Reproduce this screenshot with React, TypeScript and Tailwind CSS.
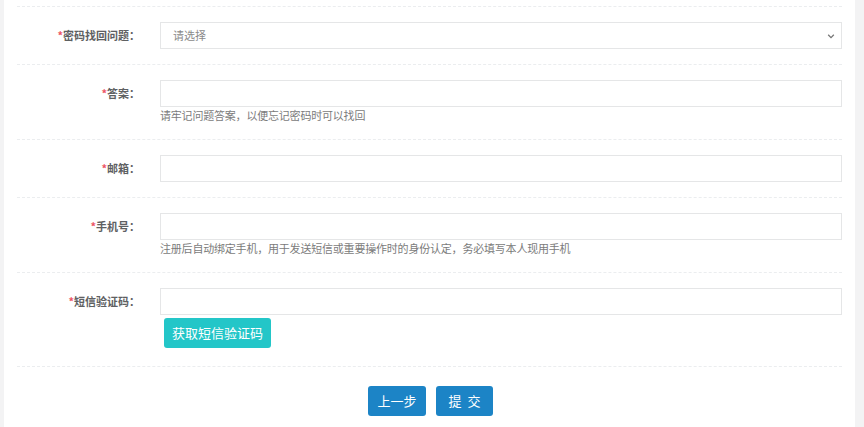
import React from "react";

const font = { fontFamily: '"Noto Sans CJK SC", "Noto Sans", sans-serif' };

function Label({ text }: { text: string }) {
  return (
    <div className="w-[125px] shrink-0 text-right text-[11px] font-bold text-[#5e6062] h-[27px] flex items-center justify-end pr-[2px]">
      <span className="text-[#ed5565]">*</span>
      <span>{text}：</span>
    </div>
  );
}

function Row({
  label,
  help,
  children,
  pb = "pb-[15px]",
}: {
  label: string;
  help?: string;
  children?: React.ReactNode;
  pb?: string;
}) {
  return (
    <div className={`flex items-start gap-[18px] pt-[15px] ${pb} border-b border-dashed border-[#ebedef]`}>
      <Label text={label} />
      <div className="flex-1 flex flex-col">
        {children ?? <div className="h-[27px] border border-[#e5e6e7] bg-white" />}
        {help && (
          <div className="h-[16px] leading-[16px] text-[11px] tracking-[-0.2px] text-[#7b7b7b]">{help}</div>
        )}
      </div>
    </div>
  );
}

export default function App() {
  return (
    <div className="w-full h-[427px] bg-[#f3f3f4] flex" style={font}>
      <div className="ml-[4px] w-[851px] h-full bg-white px-[13px] pt-[6px]">
        <div className="border-t border-dashed border-[#ebedef]" />
        <Row label="密码找回问题">
          <div className="h-[27px] border border-[#e5e6e7] bg-white flex items-center justify-between pl-[12px] pr-[6px]">
            <span className="text-[11px] text-[#8a8a8a]">请选择</span>
            <svg width="8" height="8" viewBox="0 0 10 10" fill="none">
              <path d="M1.5 3.5 L5 7 L8.5 3.5" stroke="#777" strokeWidth="1.6" />
            </svg>
          </div>
        </Row>
        <Row label="答案" help="请牢记问题答案，以便忘记密码时可以找回" pb="pb-[16px]" />
        <Row label="邮箱" />
        <Row label="手机号" help="注册后自动绑定手机，用于发送短信或重要操作时的身份认定，务必填写本人现用手机" pb="pb-[16px]" />
        <Row label="短信验证码" pb="pb-[18px]">
          <div className="h-[27px] border border-[#e5e6e7] bg-white" />
          <div className="mt-[3px] ml-[4px]">
            <button className="h-[30px] w-[107px] rounded-[3px] bg-[#23c6c8] text-white text-[13px]">
              获取短信验证码
            </button>
          </div>
        </Row>
        <div className="flex justify-center gap-[10px] pt-[19px] pl-[2px]">
          <button className="h-[30px] w-[58px] rounded-[3px] bg-[#1c84c6] text-white text-[13px]">
            上一步
          </button>
          <button className="h-[30px] w-[57px] rounded-[3px] bg-[#1c84c6] text-white text-[13px]">
            提&nbsp;&nbsp;交
          </button>
        </div>
      </div>
    </div>
  );
}
